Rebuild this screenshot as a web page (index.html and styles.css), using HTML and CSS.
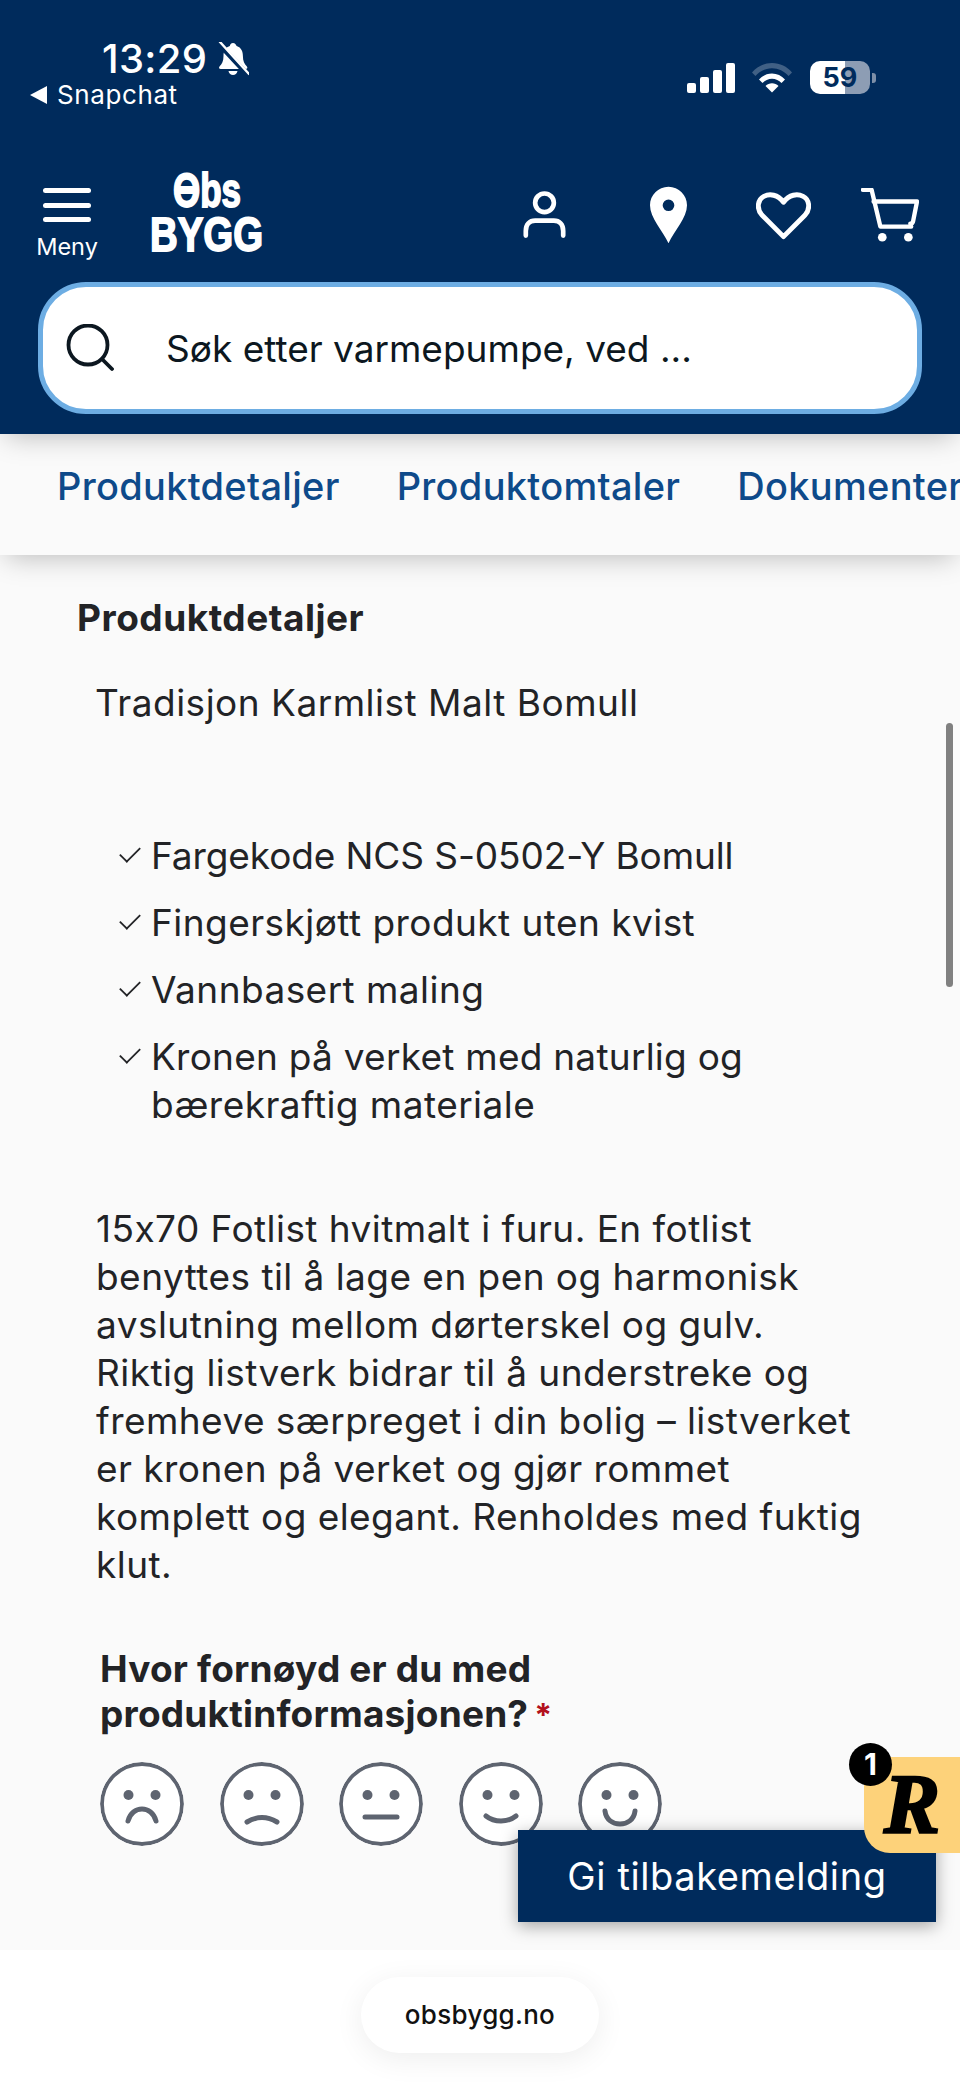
FILE: index.html
```html
<!DOCTYPE html>
<html lang="no">
<head>
<meta charset="utf-8">
<title>Obs BYGG</title>
<link rel="stylesheet" href="styles.css">
</head>
<body>
<div class="page">
  <header class="header">
    <div class="status">
      <div class="status-left">
        <div class="clock"><span>13:29</span>
          <svg class="bell" viewBox="0 0 32 34" width="32" height="34"><path fill="#fff" d="M16 1c-2 0-3 1.500-3.200 3C8 5.500 6.500 9.500 6.500 14c0 5-1.500 8-4 10.500-1 1.300-.3 2.500 1.200 2.500h25c1.500 0 2.200-1.200 1.200-2.500-2.500-2.500-4-5.500-4-10.500 0-4.500-1.500-8.500-6.300-10C19 2.500 18 1 16 1z"/><path fill="#fff" d="M11.500 29h9c-.5 2.500-2.300 4-4.500 4s-4-1.500-4.500-4z"/><path stroke="#002B5C" stroke-width="5" d="M2 2l28 30"/><path stroke="#fff" stroke-width="2.400" stroke-linecap="round" d="M3 0l29 32"/></svg>
        </div>
        <div class="back"><span class="back-arrow"></span><span>Snapchat</span></div>
      </div>
      <div class="status-right">
        <div class="signal"><i class="b1"></i><i class="b2"></i><i class="b3"></i><i class="b4"></i></div>
        <svg class="wifi" viewBox="0 0 40 30" width="40" height="30"><path fill="#fff" fill-opacity=".25" d="M0 9.500C5 3.500 12 0 20 0s15 3.500 20 9.500l-3.500 3.500C32 8 26.500 5.200 20 5.200S8 8 3.500 13z"/><path fill="#fff" d="M7 16.500C10.500 12.700 15 10.500 20 10.500s9.500 2.200 13 6l-3.500 3.500C27 17.300 23.700 15.700 20 15.700s-7 1.600-9.500 4.300z"/><path fill="#fff" d="M13.500 23c1.800-1.800 4-2.800 6.500-2.800s4.700 1 6.500 2.800L20 29.500z"/></svg>
        <div class="battery"><div class="battery-body"><span>59</span></div><i class="battery-cap"></i></div>
      </div>
    </div>
    <div class="nav">
      <div class="menu">
        <div class="burger"><i></i><i></i><i></i></div>
        <span>Meny</span>
      </div>
      <svg class="logo" viewBox="0 0 113 78" width="113" height="78">
        <text class="logo-text" x="23" y="34" font-size="48" textLength="68" lengthAdjust="spacingAndGlyphs">Obs</text>
        <rect x="25" y="13" width="20" height="8" fill="#fff"/>
        <text class="logo-text" x="0" y="78" font-size="48" textLength="113" lengthAdjust="spacingAndGlyphs">BYGG</text>
      </svg>
      <div class="nav-icons">
        <svg class="ic-user" viewBox="0 0 46 50" width="43" height="48" fill="none" stroke="#fff" stroke-width="5" stroke-linecap="round"><circle cx="23" cy="12" r="10"/><path d="M3 47v-5c0-7 4-11 10-11h20c6 0 10 4 10 11v5"/></svg>
        <svg class="ic-pin" viewBox="0 0 38 58" width="37" height="58"><path fill="#fff" fill-rule="evenodd" d="M19 0C8.500 0 0 8.500 0 19c0 13 13 26 19 39 6-13 19-26 19-39C38 8.500 29.500 0 19 0zm0 13a6 6 0 1 1 0 12 6 6 0 0 1 0-12z"/></svg>
        <svg class="ic-heart" viewBox="0 0 56 50" width="55" height="50" fill="none" stroke="#fff" stroke-width="5" stroke-linejoin="round"><path d="M28 46L6 24C0 17 2 8 8 5c6-3 14-2 20 6 6-8 14-9 20-6 6 3 8 12 2 19z"/></svg>
        <svg class="ic-cart" viewBox="0 0 60 58" width="58" height="56" fill="none" stroke="#fff" stroke-width="4.500" stroke-linecap="round" stroke-linejoin="round"><path d="M2 2h9l9 38h32"/><path d="M13 14h45l-4 20c-.300 2-1 3-3 3"/><circle cx="22" cy="51" r="4.500" fill="#fff" stroke="none"/><circle cx="49" cy="51" r="4.500" fill="#fff" stroke="none"/></svg>
      </div>
    </div>
    <div class="search">
      <svg class="ic-search" viewBox="0 0 48 48" width="48" height="48" fill="none" stroke="#0c1720" stroke-width="3.800" stroke-linecap="round"><circle cx="22" cy="21" r="19.500"/><path d="M36 35l10 10"/></svg>
      <span>Søk etter varmepumpe, ved ...</span>
    </div>
  </header>

  <nav class="tabs">
    <span>Produktdetaljer</span>
    <span>Produktomtaler</span>
    <span>Dokumenter</span>
  </nav>

  <main class="content">
    <h2 class="title">Produktdetaljer</h2>
    <p class="lead">Tradisjon Karmlist Malt Bomull</p>
    <ul class="checks">
      <li class="tight">Fargekode NCS S-0502-Y Bomull</li>
      <li>Fingerskjøtt produkt uten kvist</li>
      <li>Vannbasert maling</li>
      <li><span class="snug">Kronen på verket med naturlig og</span><br>bærekraftig materiale</li>
    </ul>
    <p class="desc">15x70 Fotlist hvitmalt i furu. En fotlist<br>benyttes til å lage en pen og harmonisk<br>avslutning mellom dørterskel og gulv.<br>Riktig listverk bidrar til å understreke og<br>fremheve særpreget i din bolig – listverket<br>er kronen på verket og gjør rommet<br>komplett og elegant. Renholdes med fuktig<br>klut.</p>
    <h3 class="question">Hvor fornøyd er du med<br>produktinformasjonen?<span class="req">*</span></h3>
    <div class="faces">
      <svg viewBox="0 0 84 84" width="84" height="84"><circle class="f-ring" cx="42" cy="42" r="40"/><circle class="f-eye" cx="28.500" cy="33" r="5"/><circle class="f-eye" cx="55.500" cy="33" r="5"/><path class="f-mouth" d="M28 59c2-8 8-12 14-12s12 4 14 12"/></svg>
      <svg viewBox="0 0 84 84" width="84" height="84"><circle class="f-ring" cx="42" cy="42" r="40"/><circle class="f-eye" cx="28.500" cy="33" r="5"/><circle class="f-eye" cx="55.500" cy="33" r="5"/><path class="f-mouth" d="M27 60c5-3 10-4.500 15-4.500s10 1.500 15 4.500"/></svg>
      <svg viewBox="0 0 84 84" width="84" height="84"><circle class="f-ring" cx="42" cy="42" r="40"/><circle class="f-eye" cx="28.500" cy="33" r="5"/><circle class="f-eye" cx="55.500" cy="33" r="5"/><path class="f-mouth" d="M26 55h32"/></svg>
      <svg viewBox="0 0 84 84" width="84" height="84"><circle class="f-ring" cx="42" cy="42" r="40"/><circle class="f-eye" cx="28.500" cy="33" r="5"/><circle class="f-eye" cx="55.500" cy="33" r="5"/><path class="f-mouth" d="M27 54c5 4 10 5 15 5s10-1 15-5"/></svg>
      <svg viewBox="0 0 84 84" width="84" height="84"><circle class="f-ring" cx="42" cy="42" r="40"/><circle class="f-eye" cx="28.500" cy="33" r="5"/><circle class="f-eye" cx="55.500" cy="33" r="5"/><path class="f-mouth" d="M27 49c1 9 8 13 15 13s14-4 15-13"/></svg>
    </div>
  </main>

  <footer class="footer"><div class="pill">obsbygg.no</div></footer>

  <div class="scrollbar"></div>
  <button class="feedback">Gi tilbakemelding</button>
  <div class="reward">
    <span class="reward-r">R</span>
    <span class="reward-badge">1</span>
  </div>
</div>
</body>
</html>
```
FILE: styles.css
```css
* { box-sizing: border-box; }
html, body { margin: 0; padding: 0; }
body { font-family: Inter, "Noto Sans", sans-serif; color: #222326; background: #fafafa; font-variant-ligatures: no-contextual; font-feature-settings: "calt" 0; }
.page { position: relative; width: 960px; height: 2087px; overflow: hidden; display: flex; flex-direction: column; }

.header { background: #002b5c; height: 434px; color: #fff; padding: 0 41px 0 30px; flex: none; position: relative; z-index: 2; box-shadow: 0 8px 26px -6px rgba(0,0,0,.26); }
.status { display: flex; justify-content: space-between; height: 164px; padding-top: 36px; }
.status-left { display: flex; flex-direction: column; }
.clock { display: flex; align-items: center; gap: 10px; margin-left: 72px; font-size: 40px; line-height: 46px; font-weight: 500; letter-spacing: .3px; }
.back { display: flex; align-items: center; gap: 10px; font-size: 26px; line-height: 32px; font-weight: 400; letter-spacing: .6px; margin-top: -3px; }
.back-arrow { width: 0; height: 0; border-style: solid; border-width: 9px 17px 9px 0; border-color: transparent #fff transparent transparent; }
.status-right { display: flex; align-items: flex-start; gap: 17px; padding-top: 27px; margin-right: 43px; }
.signal { display: flex; align-items: flex-end; gap: 4px; height: 30px; }
.signal i { display: block; width: 9px; background: #fff; border-radius: 2px; }
.signal .b1 { height: 10px; } .signal .b2 { height: 16px; } .signal .b3 { height: 23px; } .signal .b4 { height: 30px; }
.battery { display: flex; align-items: center; gap: 2px; margin-top: -2px; margin-left: 1px; }
.battery-body { width: 60px; height: 33px; border-radius: 10px; background: linear-gradient(90deg, #fff 0 59%, #8d9db4 59% 100%); color: #002b5c; font-size: 27px; font-weight: 700; line-height: 33px; text-align: center; }
.battery-cap { display: block; width: 4px; height: 10px; background: #7d8fa8; border-radius: 0 3px 3px 0; }

.nav { display: flex; align-items: flex-start; height: 118px; }
.menu { width: 74px; margin-left: 0; display: flex; flex-direction: column; align-items: center; padding-top: 24px; }
.burger { display: flex; flex-direction: column; gap: 9.500px; width: 48px; }
.burger i { display: block; height: 5px; background: #fff; border-radius: 3px; }
.menu span { font-size: 23.500px; line-height: 30px; margin-top: 10px; }
.logo { flex: none; margin: 9px 0 0 46px; overflow: visible; }
.logo-text { font-family: "Liberation Sans", sans-serif; font-weight: 700; fill: #fff; stroke: #fff; stroke-width: 1.800px; }
.nav-icons { display: flex; margin-left: auto; align-items: flex-start; }
.nav-icons svg { flex: none; }
.ic-user { margin: 27px 0 0 0; }
.ic-pin { margin: 22px 0 0 84px; }
.ic-heart { margin: 27px 0 0 69px; }
.ic-cart { margin: 24px 0 0 50px; }

.search { display: flex; align-items: center; margin: 0 0 0 8px; width: 884px; height: 132px; background: #fff; border: 5px solid #6dade3; border-radius: 48px; color: #0c1720; font-size: 37px; padding-left: 23px; gap: 52px; }
.search svg { flex: none; }

.tabs { flex: none; height: 121px; display: flex; gap: 57px; padding: 28px 0 0 57px; background: #fafafa; color: #0e4a8a; font-size: 38px; font-weight: 500; line-height: 48px; letter-spacing: .3px; white-space: nowrap; overflow: hidden; position: relative; z-index: 1; box-shadow: 0 8px 26px -6px rgba(0,0,0,.26); }

.content { flex: 1; padding: 39px 0 0 96px; background: #fafafa; overflow: hidden; font-size: 37px; letter-spacing: .45px; }
.title { margin: 0 0 0 -19px; font-size: 37px; line-height: 48px; font-weight: 700; letter-spacing: .5px; }
.lead { margin: 37px 0 0 -1px; line-height: 48px; letter-spacing: .5px; }
.checks { list-style: none; margin: 105px 0 0; padding: 0 0 0 55px; line-height: 48px; }
.checks li { position: relative; margin-bottom: 19px; }
.checks li.tight { letter-spacing: -.1px; }
.snug { letter-spacing: .25px; }
.checks li::before { content: ""; position: absolute; left: -32px; top: 14px; width: 20px; height: 10px; border-left: 2.500px solid #222326; border-bottom: 2.500px solid #222326; transform: rotate(-45deg) scale(.9); }
.desc { margin: 76px 0 0; line-height: 48px; }
.question { margin: 57px 0 0 4px; font-size: 37px; line-height: 45px; font-weight: 700; letter-spacing: .2px; color: #222326; }
.req { color: #b3111c; margin-left: 6px; font-size: 32px; }
.faces { display: flex; gap: 35.500px; margin: 24px 0 0 4px; }
.faces svg { flex: none; background: #fff; border-radius: 50%; }
.f-ring { fill: #fff; stroke: #5e6470; stroke-width: 3.800; }
.f-eye { fill: #5e6470; }
.f-mouth { fill: none; stroke: #5e6470; stroke-width: 5; stroke-linecap: round; }

.footer { flex: none; height: 137px; background: #fff; display: flex; justify-content: center; padding-top: 27px; }
.pill { width: 238px; height: 76px; background: #fff; border-radius: 38px; font-size: 26px; font-weight: 500; letter-spacing: .3px; line-height: 76px; text-align: center; color: #111; box-shadow: 0 6px 30px rgba(0,0,0,.07); }

.scrollbar { position: absolute; left: 946px; top: 723px; width: 7px; height: 264px; border-radius: 4px; background: #808080; }
.feedback { position: absolute; left: 518px; top: 1830px; width: 418px; height: 92px; border: 0; background: #002b5c; color: #fff; font: 400 38px/92px Inter, sans-serif; letter-spacing: .6px; padding: 0; box-shadow: 0 4px 16px rgba(0,0,0,.35); z-index: 3; }
.reward { position: absolute; left: 864px; top: 1757px; width: 96px; height: 96px; background: #fdd27a; border-radius: 26px 0 0 26px; z-index: 4; display: flex; align-items: center; justify-content: center; }
.reward-r { font-family: "Liberation Serif", serif; font-style: italic; font-weight: 700; font-size: 84px; line-height: 1; color: #000; -webkit-text-stroke: 2.500px #000; }
.reward-badge { position: absolute; left: -15px; top: -14px; width: 43px; height: 43px; border-radius: 50%; background: #000; color: #fff; font-size: 30px; font-weight: 700; line-height: 43px; text-align: center; }
```
